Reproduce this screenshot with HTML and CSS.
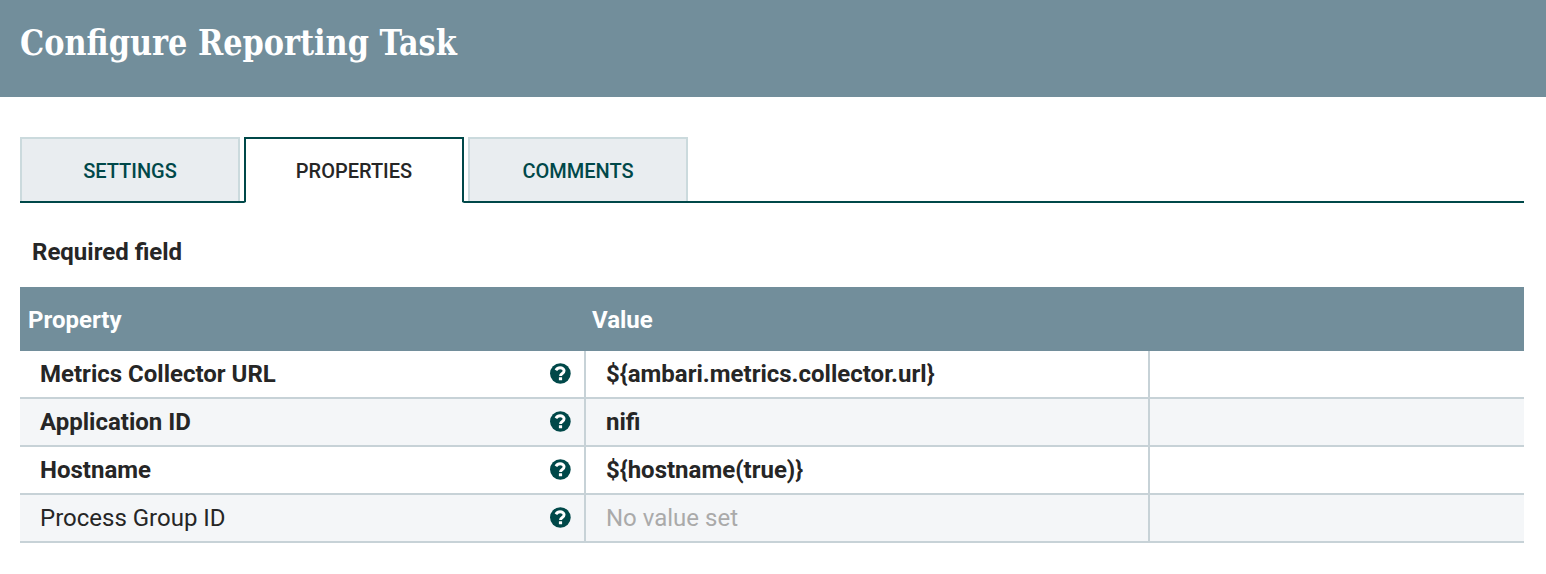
FILE: index.html
```html
<!DOCTYPE html>
<html lang="en">
<head>
<meta charset="utf-8">
<title>Configure Reporting Task</title>
<link rel="stylesheet" href="styles.css">
</head>
<body>
<svg class="sprite" aria-hidden="true">
  <symbol id="help" viewBox="0 0 21 21"><circle cx="10.35" cy="10.5" r="10.35"/><path fill="none" stroke="#fff" stroke-width="2.9" d="M5.9 7.3C7 5.4 8.3 4.7 10.1 4.7c2.2 0 4 1.3 4 3.1 0 2.8-3.6 2.5-3.6 5.2"/><rect x="8.9" y="14.2" width="3.2" height="3.1" rx=".3" fill="#fff"/></symbol>
</svg>
<header class="dialog-header"><h1 class="dialog-title">Configure Reporting Task</h1></header>
<main class="dialog-content">
  <nav class="tabs">
    <div class="tab">SETTINGS</div>
    <div class="tab tab-selected">PROPERTIES</div>
    <div class="tab">COMMENTS</div>
  </nav>
  <div class="required-note">Required field</div>
  <section class="grid">
    <div class="grid-header"><div>Property</div><div>Value</div><div></div></div>
    <div class="row required"><div class="cell name"><span>Metrics Collector URL</span><svg class="help"><use href="#help"/></svg></div><div class="cell">${ambari.metrics.collector.url}</div><div></div></div>
    <div class="row required"><div class="cell name"><span>Application ID</span><svg class="help"><use href="#help"/></svg></div><div class="cell">nifi</div><div></div></div>
    <div class="row required"><div class="cell name"><span>Hostname</span><svg class="help"><use href="#help"/></svg></div><div class="cell">${hostname(true)}</div><div></div></div>
    <div class="row"><div class="cell name"><span>Process Group ID</span><svg class="help"><use href="#help"/></svg></div><div class="cell unset">No value set</div><div></div></div>
  </section>
</main>
</body>
</html>
```
FILE: styles.css
```css
* { box-sizing: border-box; }
body {
  margin: 0;
  background: #fff;
  color: #262626;
  font-family: Roboto, sans-serif;
  font-size: 24px;
}
.sprite { display: none; }
.dialog-header {
  height: 97px;
  padding: 19px 20px 0;
  background: #728e9b;
}
.dialog-title {
  margin: 0;
  width: max-content;
  color: #fff;
  font: bold 35px/48px "Roboto Slab", "DejaVu Serif Condensed", "DejaVu Serif", serif;
  font-stretch: condensed;
  transform: scaleX(0.965);
  transform-origin: left;
}
.dialog-content { padding: 40px 22px 0 20px; }
.tabs {
  display: flex;
  gap: 4px;
  height: 66px;
  border-bottom: 2px solid #004849;
}
.tab {
  width: 220px;
  height: 64px;
  border: 2px solid #cbdadd;
  border-bottom: 0;
  background: #e9edf0;
  color: #004849;
  font-size: 20px;
  font-weight: 500;
  line-height: 65px;
  text-align: center;
}
.tab-selected {
  height: 66px;
  border-color: #004849;
  border-bottom: 1px solid #fff;
  background: #fff;
  color: #262626;
}
.required-note {
  padding: 33px 12px 0;
  height: 84px;
  font-weight: bold;
  line-height: 32px;
}
.grid-header, .row {
  display: grid;
  grid-template-columns: 566px 564px 1fr;
}
.grid-header {
  height: 64px;
  background: #728e9b;
  color: #fff;
  font-weight: bold;
  line-height: 66px;
}
.grid-header > div { padding-left: 8px; }
.grid-header > div + div { padding-left: 6px; }
.row {
  height: 48px;
  border-bottom: 2px solid #c7d2d7;
  line-height: 46px;
}
.row:nth-child(odd) { background: #f4f6f8; }
.required { font-weight: bold; }
.cell {
  padding-left: 20px;
  border-right: 2px solid #c7d2d7;
}
.name {
  display: flex;
  align-items: center;
  justify-content: space-between;
  padding-right: 13px;
}
.help {
  width: 21px;
  height: 21px;
  margin-bottom: 2px;
  fill: #004849;
}
.unset { color: #aaa; }
```
